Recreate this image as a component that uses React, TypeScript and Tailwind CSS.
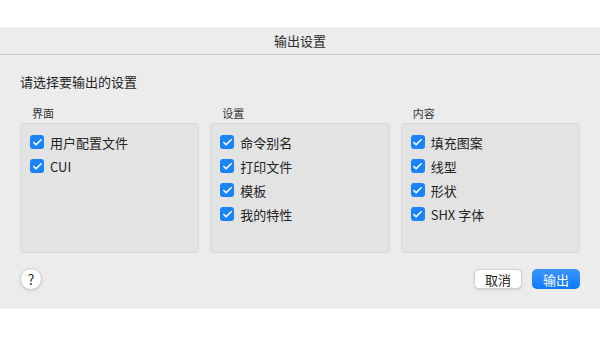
import { Check } from "lucide-react";

const groups = [
  { title: "界面", items: ["用户配置文件", "CUI"] },
  { title: "设置", items: ["命令别名", "打印文件", "模板", "我的特性"] },
  { title: "内容", items: ["填充图案", "线型", "形状", "SHX 字体"] },
];

const font = { fontFamily: '"Noto Sans CJK SC", "Noto Sans", sans-serif' };

const CheckRow = ({ label }: { label: string }) => (
  <div className="flex items-center gap-[6px] h-6">
    <div className="w-[14px] h-[14px] rounded-[3px] bg-[#1a82fb] flex items-center justify-center">
      <Check size={11} strokeWidth={3.5} className="text-white" />
    </div>
    <span className="text-[13px] text-[#242424] leading-none">{label}</span>
  </div>
);

export default function App() {
  return (
    <div className="w-[600px] h-[338px] bg-white flex flex-col" style={font}>
      <div className="h-[27px]" />
      <div className="h-[282px] bg-[#ececec] flex flex-col">
        <div className="h-[28px] border-b border-[#c9c9c9] flex items-center justify-center text-[13px] text-[#2a2a2a]">
          输出设置
        </div>
        <div className="px-5 pt-[18px] text-[13px] text-[#222] leading-[18px]">
          请选择要输出的设置
        </div>
        <div className="flex gap-[11px] px-5 mt-[15px]">
          {groups.map((g) => (
            <div key={g.title} className="flex-1 flex flex-col">
              <div className="text-[11px] text-[#333] leading-[14px] pl-[12px] mb-[3px]">{g.title}</div>
              <div className="h-[130px] bg-[#e3e3e3] border border-[#d8d8d8] rounded-[4px] pl-[9px] pt-[6px]">
                {g.items.map((it) => (
                  <CheckRow key={it} label={it} />
                ))}
              </div>
            </div>
          ))}
        </div>
        <div className="flex items-center px-5 mt-[15px]">
          <div className="w-[22px] h-[22px] rounded-full bg-white border border-[#d0d0d0] shadow-sm flex items-center justify-center text-[14px] text-[#333]">
            ?
          </div>
          <div className="flex-1" />
          <button className="w-[48px] h-[20px] rounded-[5px] bg-white border border-[#d0d0d0] shadow-sm text-[13px] text-[#222] leading-none">
            取消
          </button>
          <button className="ml-[10px] w-[48px] h-[20px] rounded-[5px] bg-gradient-to-b from-[#3b95fd] to-[#0a79f8] text-[13px] text-white leading-none">
            输出
          </button>
        </div>
      </div>
    </div>
  );
}
